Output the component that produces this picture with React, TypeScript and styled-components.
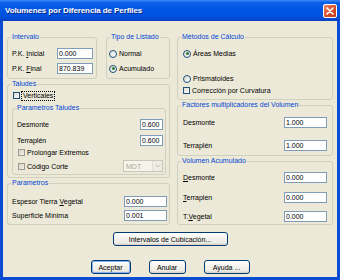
import React from "react";
import styled, { createGlobalStyle } from "styled-components";

const GlobalStyle = createGlobalStyle`
  html, body { margin: 0; padding: 0; }
  body {
    font-family: "Liberation Sans", Arial, sans-serif;
    font-size: 7px;
    color: #000;
    background: #ece9d8;
  }
`;

const Window = styled.div`
  width: 340px;
  height: 280px;
  display: flex;
  flex-direction: column;
  overflow: hidden;
`;

const TitleBar = styled.div`
  height: 21px;
  flex: none;
  box-sizing: border-box;
  padding: 0 3px 0 5px;
  display: flex;
  align-items: center;
  justify-content: space-between;
  background: linear-gradient(#3d8cf8 0%, #0d5fe6 12%, #0055e5 45%, #0050dd 80%, #0840c4 100%);
`;

const Title = styled.span`
  color: #fff;
  font-weight: bold;
  font-size: 8px;
  letter-spacing: -0.1px;
  text-shadow: 1px 1px 0 #0a2a8a;
`;

const CloseButton = styled.div`
  width: 14px;
  height: 14px;
  box-sizing: border-box;
  border: 1px solid #fff;
  border-radius: 2px;
  background: linear-gradient(135deg, #e98a6c 0%, #d9512c 50%, #c13a15 100%);
  display: flex;
  align-items: center;
  justify-content: center;
`;

const Body = styled.div`
  flex: 1;
  box-sizing: border-box;
  background: #ece9d8;
  border: 3px solid #0a4bd3;
  border-top: none;
  padding: 12px 4px 0;
  display: flex;
  flex-direction: column;
  align-items: center;
`;

const Columns = styled.div`
  display: grid;
  grid-template-columns: 163px 156px;
  column-gap: 7px;
`;

const Column = styled.div`
  display: flex;
  flex-direction: column;
  gap: 1px;
`;

const TopRow = styled.div`
  display: flex;
  gap: 9px;
`;

const Group = styled.fieldset<{ $w?: number; $h: number; $mt?: number }>`
  margin: ${(p) => p.$mt ?? 0}px 0 0;
  padding: 0;
  min-width: 0;
  box-sizing: border-box;
  width: ${(p) => (p.$w ? `${p.$w}px` : "auto")};
  height: ${(p) => p.$h}px;
  border: 1px solid #d0d0bf;
  border-radius: 3px;
`;

const Caption = styled.legend`
  margin-left: 3px;
  padding: 0 1px;
  line-height: 8px;
  font-size: 7px;
  color: #0046d5;
`;

const Content = styled.div<{ $pt: number; $pl: number; $pr?: number }>`
  display: flex;
  flex-direction: column;
  padding: ${(p) => p.$pt}px ${(p) => p.$pr ?? 0}px 0 ${(p) => p.$pl}px;
`;

const Row = styled.div<{ $h: number; $mt?: number }>`
  display: flex;
  align-items: center;
  justify-content: space-between;
  height: ${(p) => p.$h}px;
  margin-top: ${(p) => p.$mt ?? 0}px;
`;

const Label = styled.span`
  white-space: nowrap;
`;

const U = styled.u`
  text-decoration: underline;
`;

const TextBox = styled.input<{ $w: number }>`
  width: ${(p) => p.$w}px;
  height: 100%;
  box-sizing: border-box;
  margin: 0;
  padding: 0 1px;
  border: 1px solid #7f9db9;
  background: #fff;
  font: inherit;
  color: #000;
  outline: none;
`;

const Option = styled.span<{ $ml?: number }>`
  display: flex;
  align-items: center;
  gap: 2px;
  margin-left: ${(p) => p.$ml ?? 0}px;
`;

const Radio = styled.span<{ $checked?: boolean }>`
  width: 8px;
  height: 8px;
  box-sizing: border-box;
  border-radius: 50%;
  border: 1px solid #1c5180;
  background: linear-gradient(135deg, #dcd9cf, #fff);
  display: flex;
  align-items: center;
  justify-content: center;
  &::after {
    content: "";
    display: ${(p) => (p.$checked ? "block" : "none")};
    width: 3px;
    height: 3px;
    border-radius: 50%;
    background: #2f7d32;
  }
`;

const CheckBox = styled.span<{ $disabled?: boolean }>`
  width: 7px;
  height: 7px;
  box-sizing: border-box;
  border: 1px solid ${(p) => (p.$disabled ? "#9c9a90" : "#1c5180")};
  background: ${(p) =>
    p.$disabled ? "linear-gradient(135deg, #d8d5c8, #f2f0e8)" : "linear-gradient(135deg, #dcd9cf, #fff)"};
`;

const Focused = styled.span`
  outline: 1px dotted #000;
  outline-offset: 0;
  padding: 0 1px;
  line-height: 8px;
`;

const Combo = styled.div`
  width: 40px;
  height: 100%;
  box-sizing: border-box;
  border: 1px solid #c9c7ba;
  background: #f5f4ea;
  display: flex;
  align-items: center;
  justify-content: space-between;
  padding-left: 2px;
  color: #aca899;
`;

const ComboArrow = styled.span`
  width: 10px;
  height: 100%;
  box-sizing: border-box;
  border-left: 1px solid #e2e0d6;
  background: #eeede5;
  display: flex;
  align-items: center;
  justify-content: center;
`;

const ButtonRow = styled.div<{ $mt: number; $gap?: number }>`
  display: flex;
  justify-content: center;
  gap: ${(p) => p.$gap ?? 0}px;
  margin-top: ${(p) => p.$mt}px;
`;

const XpButton = styled.button<{ $w: number; $default?: boolean }>`
  width: ${(p) => p.$w}px;
  height: 14px;
  margin: 0;
  padding: 0;
  box-sizing: border-box;
  border: 1px solid #003c74;
  border-radius: 3px;
  background: linear-gradient(#ffffff 0%, #f4f3ee 40%, #ecebe6 80%, #d6d0c5 100%);
  box-shadow: ${(p) => (p.$default ? "inset 0 0 0 1px #8cb0f0" : "none")};
  font: inherit;
  color: #000;
`;

function Chevron() {
  return (
    <svg width="6" height="4" viewBox="0 0 6 4">
      <path d="M0.5 0.5 L3 3 L5.5 0.5" stroke="#c2c0b4" strokeWidth="1" fill="none" />
    </svg>
  );
}

function CloseX() {
  return (
    <svg width="8" height="8" viewBox="0 0 8 8">
      <path d="M1 1 L7 7 M7 1 L1 7" stroke="#fff" strokeWidth="1.6" strokeLinecap="round" />
    </svg>
  );
}

export default function App() {
  return (
    <Window>
      <GlobalStyle />
      <TitleBar>
        <Title>Volumenes por Diferencia de Perfiles</Title>
        <CloseButton>
          <CloseX />
        </CloseButton>
      </TitleBar>

      <Body>
        <Columns>
          <Column>
            <TopRow>
              <Group $w={90} $h={46}>
                <Caption>Intervalo</Caption>
                <Content $pt={7} $pl={4} $pr={3}>
                  <Row $h={11}>
                    <Label>P.K. <U>I</U>nicial</Label>
                    <TextBox $w={36} readOnly value="0.000" />
                  </Row>
                  <Row $h={11} $mt={4}>
                    <Label>P.K. <U>F</U>inal</Label>
                    <TextBox $w={36} readOnly value="870.839" />
                  </Row>
                </Content>
              </Group>
              <Group $w={64} $h={46}>
                <Caption>Tipo de Listado</Caption>
                <Content $pt={7} $pl={2}>
                  <Row $h={11}>
                    <Option>
                      <Radio />
                      <Label>Normal</Label>
                    </Option>
                  </Row>
                  <Row $h={11} $mt={4}>
                    <Option>
                      <Radio $checked />
                      <Label>Acumulado</Label>
                    </Option>
                  </Row>
                </Content>
              </Group>
            </TopRow>

            <Group $h={98}>
              <Caption>Taludes</Caption>
              <Content $pt={3} $pl={4} $pr={3}>
                <Row $h={9}>
                  <Option $ml={1}>
                    <CheckBox />
                    <Focused>Verticales</Focused>
                  </Option>
                </Row>
                <Group $h={71} $mt={4}>
                  <Caption>Parametros Taludes</Caption>
                  <Content $pt={7} $pl={4} $pr={2}>
                    <Row $h={11}>
                      <Label>Desmonte</Label>
                      <TextBox $w={23} readOnly value="0.600" />
                    </Row>
                    <Row $h={11} $mt={5}>
                      <Label>Terraplén</Label>
                      <TextBox $w={23} readOnly value="0.600" />
                    </Row>
                    <Row $h={10} $mt={1}>
                      <Option $ml={1}>
                        <CheckBox $disabled />
                        <Label>Prolongar Extremos</Label>
                      </Option>
                    </Row>
                    <Row $h={12} $mt={3}>
                      <Option $ml={1}>
                        <CheckBox $disabled />
                        <Label>Código Corte</Label>
                      </Option>
                      <Combo>
                        <span>MDT</span>
                        <ComboArrow>
                          <Chevron />
                        </ComboArrow>
                      </Combo>
                    </Row>
                  </Content>
                </Group>
              </Content>
            </Group>

            <Group $h={46}>
              <Caption>Parametros</Caption>
              <Content $pt={9} $pl={4} $pr={2}>
                <Row $h={11}>
                  <Label>Espesor Tierra <U>V</U>egetal</Label>
                  <TextBox $w={43} readOnly value="0.000" />
                </Row>
                <Row $h={11} $mt={3}>
                  <Label>Superficie Mínima</Label>
                  <TextBox $w={43} readOnly value="0.001" />
                </Row>
              </Content>
            </Group>
          </Column>

          <Column>
            <Group $h={67}>
              <Caption>Métodos de Cálculo</Caption>
              <Content $pt={7} $pl={5}>
                <Row $h={11}>
                  <Option>
                    <Radio $checked />
                    <Label>Áreas Medias</Label>
                  </Option>
                </Row>
                <Row $h={11} $mt={14}>
                  <Option>
                    <Radio />
                    <Label>Prismatoides</Label>
                  </Option>
                </Row>
                <Row $h={9} $mt={2}>
                  <Option>
                    <CheckBox />
                    <Label>Corrección por Curvatura</Label>
                  </Option>
                </Row>
              </Content>
            </Group>

            <Group $h={55}>
              <Caption>Factores multiplicadores del Volumen</Caption>
              <Content $pt={8} $pl={5} $pr={5}>
                <Row $h={11}>
                  <Label>Desmonte</Label>
                  <TextBox $w={43} readOnly value="1.000" />
                </Row>
                <Row $h={11} $mt={12}>
                  <Label>Terraplén</Label>
                  <TextBox $w={43} readOnly value="1.000" />
                </Row>
              </Content>
            </Group>

            <Group $h={68}>
              <Caption>Volumen Acumulado</Caption>
              <Content $pt={7} $pl={5} $pr={5}>
                <Row $h={11}>
                  <Label><U>D</U>esmonte</Label>
                  <TextBox $w={43} readOnly value="0.000" />
                </Row>
                <Row $h={11} $mt={9}>
                  <Label><U>T</U>erraplen</Label>
                  <TextBox $w={43} readOnly value="0.000" />
                </Row>
                <Row $h={11} $mt={8}>
                  <Label>T.<U>V</U>egetal</Label>
                  <TextBox $w={43} readOnly value="0.000" />
                </Row>
              </Content>
            </Group>
          </Column>
        </Columns>

        <ButtonRow $mt={7}>
          <XpButton $w={115}>Intervalos de Cubicación...</XpButton>
        </ButtonRow>
        <ButtonRow $mt={14} $gap={18}>
          <XpButton $w={40} $default>Aceptar</XpButton>
          <XpButton $w={37}>Anular</XpButton>
          <XpButton $w={46}>Ayuda ...</XpButton>
        </ButtonRow>
      </Body>
    </Window>
  );
}
